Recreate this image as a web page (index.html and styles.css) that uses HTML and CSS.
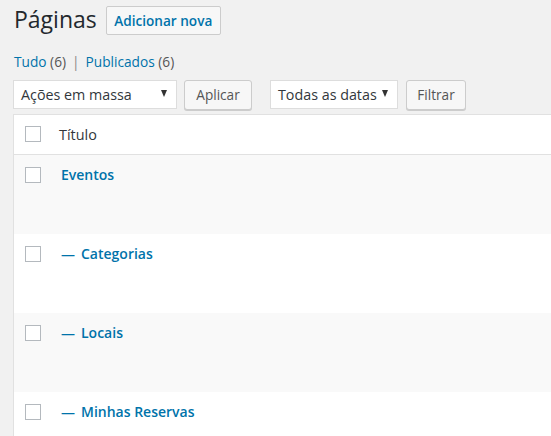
FILE: index.html
```html
<!DOCTYPE html>
<html lang="pt-BR">
<head>
<meta charset="utf-8">
<title>Páginas</title>
<link rel="stylesheet" href="styles.css">
</head>
<body>
<div class="wrap">
  <div class="heading">
    <h1 class="title">Páginas</h1>
    <a class="add-new">Adicionar nova</a>
  </div>
  <ul class="subsubsub">
    <li><a class="current">Tudo <span class="count">(6)</span></a><span class="sep">|</span></li>
    <li><a>Publicados <span class="count">(6)</span></a></li>
  </ul>
  <div class="tablenav">
    <div class="select select-bulk"><span>Ações em massa</span><i class="arrow"></i></div>
    <button class="btn btn-apply">Aplicar</button>
    <div class="select select-date"><span>Todas as datas</span><i class="arrow"></i></div>
    <button class="btn btn-filter">Filtrar</button>
  </div>
  <div class="table">
    <div class="row head">
      <span class="cb"></span><span class="col-title">Título</span>
    </div>
    <div class="row alt">
      <span class="cb"></span><a class="page-link">Eventos</a>
    </div>
    <div class="row">
      <span class="cb"></span><a class="page-link"><span class="dash">—</span>Categorias</a>
    </div>
    <div class="row alt">
      <span class="cb"></span><a class="page-link"><span class="dash">—</span>Locais</a>
    </div>
    <div class="row">
      <span class="cb"></span><a class="page-link"><span class="dash">—</span>Minhas Reservas</a>
    </div>
  </div>
</div>
</body>
</html>
```
FILE: styles.css
```css
html, body {
  margin: 0;
  padding: 0;
  background: #f1f1f1;
  overflow: hidden;
  height: 100%;
}
body {
  font-family: "Open Sans", "Noto Sans", sans-serif;
  color: #444;
  font-size: 13px;
}
.wrap {
  padding-left: 13px;
  width: 600px;
}
.heading {
  display: flex;
  align-items: center;
  height: 29px;
  padding-top: 6px;
}
.title {
  margin: 0;
  font-size: 23px;
  font-weight: 400;
  color: #23282d;
  line-height: 29px;
  position: relative;
  top: -1px;
  left: 1px;
}
.add-new {
  margin-left: 10px;
  box-sizing: border-box;
  width: 115px;
  text-align: center;
  border: 1px solid #ccc;
  border-radius: 2px;
  background: #f7f7f7;
  color: #0073aa;
  font-weight: 600;
  font-size: 13.6px;
  line-height: 27px;
  display: inline-block;
  height: 29px;
}
.subsubsub {
  list-style: none;
  margin: 17px 0 0;
  padding: 0 0 0 1px;
  display: flex;
  font-size: 13.7px;
  line-height: 20px;
  color: #666;
}
.subsubsub a {
  color: #0073aa;
}
.subsubsub .count {
  color: #555;
}
.sep {
  color: #888;
  margin: 0 6px 0 6px;
}
.tablenav {
  display: flex;
  align-items: flex-start;
  margin-top: 8px;
  height: 34px;
}
.select {
  box-sizing: border-box;
  height: 29px;
  background: #fff;
  border: 1px solid #ddd;
  display: flex;
  align-items: center;
  justify-content: space-between;
  padding: 0 9px 0 7px;
  font-size: 14.3px;
  color: #32373c;
}
.select-bulk { width: 164px; }
.select-date { width: 128px; margin-left: 18px; }
.arrow {
  flex: none;
  width: 0;
  height: 0;
  border-left: 3.5px solid transparent;
  border-right: 3.5px solid transparent;
  border-top: 7px solid #333;
  margin-top: -2px;
}
.btn {
  box-sizing: border-box;
  height: 30px;
  margin-left: 7px;
  padding: 0;
  border: 1px solid #ccc;
  border-radius: 3px;
  background: #f7f7f7;
  box-shadow: 0 1px 0 #ccc;
  color: #555;
  font-family: inherit;
  font-size: 13.6px;
  line-height: 28px;
}
.btn-apply { width: 68px; }
.btn-filter { width: 60px; margin-left: 8px; }
.table {
  border-top: 1px solid #e1e1e1;
  border-left: 1px solid #e1e1e1;
  background: #fff;
}
.row {
  display: flex;
  align-items: flex-start;
  height: 79px;
  box-sizing: border-box;
  padding-top: 12px;
  padding-left: 11px;
}
.row.head {
  height: 40px;
  padding-top: 11px;
  border-bottom: 1px solid #e1e1e1;
}
.row.alt {
  background: #f9f9f9;
}
.cb {
  width: 16px;
  height: 16px;
  box-sizing: border-box;
  border: 1px solid #b4b9be;
  background: #fff;
  flex: none;
}
.col-title {
  margin-left: 18px;
  font-size: 14.4px;
  color: #32373c;
  line-height: 18px;
}
.page-link {
  margin-left: 20px;
  font-size: 14px;
  font-weight: 600;
  color: #0073aa;
  line-height: 16px;
}
.dash {
  margin-right: 6px;
}
```
